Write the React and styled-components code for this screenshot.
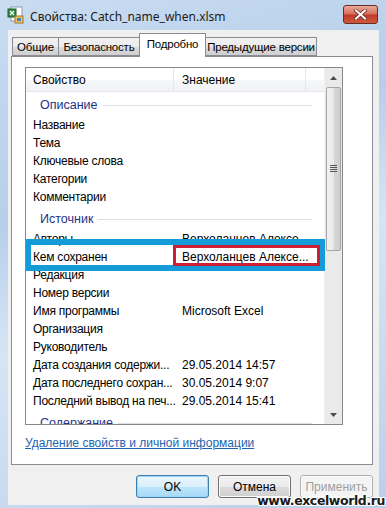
import React from "react";
import styled, { createGlobalStyle } from "styled-components";

const GlobalStyle = createGlobalStyle`
  html, body {
    margin: 0;
    padding: 0;
  }
  body {
    font-family: "Liberation Sans", Arial, sans-serif;
    font-size: 12px;
    color: #000;
  }
`;

const Window = styled.div`
  position: relative;
  width: 386px;
  height: 508px;
  display: flex;
  flex-direction: column;
  overflow: hidden;
  background: linear-gradient(160deg, #c9dcf1 0%, #b7cfea 35%, #d6e5f5 55%, #b9d0ea 100%);
`;

const TitleBar = styled.div`
  height: 30px;
  display: flex;
  align-items: center;
  padding: 0 8px 0 7px;
  gap: 5px;
  flex-shrink: 0;
`;

const Title = styled.div`
  flex: 1;
  font-family: "Noto Sans", sans-serif;
  font-size: 12px;
  color: #1b1b1b;
  padding-top: 2px;
`;

const CloseButton = styled.div`
  width: 33px;
  height: 17px;
  margin-top: -2px;
  border: 1px solid #6b2a22;
  border-radius: 3px;
  background: linear-gradient(180deg, #e9a99a 0%, #d7705c 45%, #c0392b 55%, #cf5a3c 100%);
  display: flex;
  align-items: center;
  justify-content: center;
`;

const Frame = styled.div`
  flex: 1;
  padding: 0 7px 3px 8px;
  display: flex;
`;

const Content = styled.div`
  flex: 1;
  background: #f0f0f0;
  display: flex;
  flex-direction: column;
  padding: 3px 6px 0 3px;
`;

const TabStrip = styled.div`
  display: flex;
  align-items: flex-end;
  height: 23px;
  padding-left: 1px;
  position: relative;
  z-index: 1;
`;

const Tab = styled.div`
  width: ${({ $w }) => $w}px;
  height: ${({ $active }) => ($active ? "24px" : "19px")};
  margin-bottom: ${({ $active }) => ($active ? "-1px" : "0")};
  border: 1px solid #898c95;
  border-bottom: ${({ $active }) => ($active ? "none" : "1px solid #898c95")};
  margin-left: ${({ $first }) => ($first ? "0" : "-1px")};
  background: ${({ $active }) =>
    $active ? "#fff" : "linear-gradient(180deg, #f2f2f2 0%, #ebebeb 50%, #dddddd 51%, #cfcfcf 100%)"};
  display: flex;
  align-items: center;
  justify-content: center;
  padding-bottom: ${({ $active }) => ($active ? "4px" : "0")};
  box-sizing: border-box;
  font-size: 11.5px;
  letter-spacing: -0.2px;
  white-space: nowrap;
`;

const Panel = styled.div`
  background: #fff;
  border: 1px solid #898c95;
  height: 409px;
  box-sizing: border-box;
  padding: 10px 29px 0 13px;
  display: flex;
  flex-direction: column;
`;

const ListBox = styled.div`
  height: 356px;
  border: 1px solid #828790;
  display: flex;
  position: relative;
  overflow: hidden;
`;

const ListMain = styled.div`
  flex: 1;
  display: flex;
  flex-direction: column;
  overflow: hidden;
`;

const HeaderRow = styled.div`
  height: 23px;
  flex-shrink: 0;
  display: flex;
  background: linear-gradient(180deg, #ffffff 0%, #ffffff 50%, #f5f7f9 51%, #f1f3f6 100%);
  border-bottom: 1px solid #e3e6ea;
`;

const HeaderCell = styled.div`
  width: ${({ $w }) => $w}px;
  flex: ${({ $w }) => ($w ? "none" : "1")};
  border-right: ${({ $last }) => ($last ? "none" : "1px solid #e3e8ee")};
  padding-left: ${({ $pad }) => $pad}px;
  display: flex;
  align-items: center;
  box-sizing: border-box;
`;

const GroupRow = styled.div`
  height: 24px;
  flex-shrink: 0;
  display: flex;
  align-items: center;
  padding: 2px 12px 0 14px;
  box-sizing: border-box;
  gap: 5px;
  color: #1e3287;
  font-size: 12.5px;
`;

const GroupLine = styled.div`
  flex: 1;
  height: 1px;
  background: #d8dee4;
  margin-top: 1px;
`;

const Row = styled.div`
  height: 18px;
  flex-shrink: 0;
  display: flex;
  align-items: center;
`;

const NameCell = styled.div`
  width: 148px;
  padding-left: 7px;
  box-sizing: border-box;
  white-space: nowrap;
  letter-spacing: -0.25px;
`;

const ValueCell = styled.div`
  flex: 1;
  padding-left: 8px;
  white-space: nowrap;
`;

const ScrollBar = styled.div`
  width: 17px;
  flex-shrink: 0;
  background: #eaeaea;
  border-left: 1px solid #f3f3f3;
  display: flex;
  flex-direction: column;
`;

const ArrowBox = styled.div`
  height: 19px;
  display: flex;
  align-items: center;
  justify-content: center;
  flex-shrink: 0;
`;

const Track = styled.div`
  flex: 1;
  display: flex;
  flex-direction: column;
`;

const Thumb = styled.div`
  height: 162px;
  margin: 0 1px;
  border: 1px solid #a4a4a4;
  border-radius: 2px;
  background: linear-gradient(90deg, #f2f2f2 0%, #e8e8e8 50%, #d6d6d6 51%, #cfcfcf 100%);
  display: flex;
  align-items: center;
  justify-content: center;
`;

const Highlight = styled.div`
  position: absolute;
  left: -1px;
  top: 171px;
  width: 300px;
  height: 32px;
  border: 6px solid #149bd8;
  box-sizing: border-box;
  pointer-events: none;
`;

const RedBox = styled.div`
  position: absolute;
  left: 147px;
  top: 177px;
  width: 147px;
  height: 21px;
  border: 3px solid #cc1f35;
  box-sizing: border-box;
  pointer-events: none;
`;

const LinkRow = styled.div`
  padding-top: 11px;
`;

const Link = styled.a`
  color: #1c64b0;
  text-decoration: underline;
  font-size: 12px;
  cursor: pointer;
`;

const ButtonRow = styled.div`
  display: flex;
  justify-content: flex-end;
  gap: 9px;
  padding-top: 10px;
`;

const Button = styled.div`
  width: 73px;
  height: 23px;
  box-sizing: border-box;
  border: 1px solid ${({ $focus, $disabled }) => ($focus ? "#3c7fb1" : $disabled ? "#adb2b5" : "#707070")};
  border-radius: 3px;
  background: ${({ $focus, $disabled }) =>
    $disabled
      ? "#f4f4f4"
      : $focus
      ? "linear-gradient(180deg, #eaf6fd 0%, #d9f0fc 50%, #bee6fd 51%, #a7d9f5 100%)"
      : "linear-gradient(180deg, #f2f2f2 0%, #ebebeb 50%, #dddddd 51%, #cfcfcf 100%)"};
  box-shadow: ${({ $focus }) => ($focus ? "inset 0 0 0 1px #9fd5f1" : "inset 0 0 0 1px #fcfcfc")};
  color: ${({ $disabled }) => ($disabled ? "#a0a0a0" : "#000")};
  display: flex;
  align-items: center;
  justify-content: center;
  font-size: 12px;
`;

const Watermark = styled.div`
  position: absolute;
  right: 0;
  bottom: 0;
  font-family: "DejaVu Sans", sans-serif;
  font-weight: bold;
  font-size: 12.5px;
  letter-spacing: -0.4px;
  color: #1a1a1a;
  text-shadow: -1px -1px 0 #fff, 1px -1px 0 #fff, -1px 1px 0 #fff, 1px 1px 0 #fff, 0 1px 0 #fff, 0 -1px 0 #fff;
  line-height: 15px;
  padding-right: 1px;
`;

const FileIcon = () => (
  <svg width="18" height="18" viewBox="0 0 18 18">
    <rect x="4" y="1" width="11" height="14" fill="#fff" stroke="#8a9bb0" />
    <rect x="1" y="3" width="8" height="8" fill="#2d8a3e" stroke="#1c5e28" />
    <path d="M3 5 L7 9 M7 5 L3 9" stroke="#fff" strokeWidth="1.4" />
    <rect x="8" y="10" width="8" height="7" fill="#e9c46a" stroke="#a07a1e" />
    <rect x="10" y="12" width="4" height="3" fill="#4a7fc1" />
  </svg>
);

const CloseIcon = () => (
  <svg width="13" height="11" viewBox="0 0 13 11">
    <path d="M2 1.5 L11 9.5 M11 1.5 L2 9.5" stroke="#6b2a22" strokeWidth="3.6" strokeLinecap="square" />
    <path d="M2 1.5 L11 9.5 M11 1.5 L2 9.5" stroke="#fff" strokeWidth="2" strokeLinecap="square" />
  </svg>
);

const Arrow = ({ down }) => (
  <svg width="7" height="4" viewBox="0 0 7 4">
    <path d={down ? "M0 0 L7 0 L3.5 4 Z" : "M0 4 L7 4 L3.5 0 Z"} fill="#4d4d4d" />
  </svg>
);

const Grip = () => (
  <svg width="7" height="8" viewBox="0 0 7 8">
    {[0, 2, 4, 6].map((y) => (
      <rect key={y} x="0" y={y} width="7" height="1" fill="#555" />
    ))}
  </svg>
);

const groups = [
  {
    title: "Описание",
    rows: [["Название"], ["Тема"], ["Ключевые слова"], ["Категории"], ["Комментарии"]],
  },
  {
    title: "Источник",
    rows: [
      ["Авторы", "Верхоланцев Алексе..."],
      ["Кем сохранен", "Верхоланцев Алексе..."],
      ["Редакция"],
      ["Номер версии"],
      ["Имя программы", "Microsoft Excel"],
      ["Организация"],
      ["Руководитель"],
      ["Дата создания содержи...", "29.05.2014 14:57"],
      ["Дата последнего сохран...", "30.05.2014 9:07"],
      ["Последний вывод на печ...", "29.05.2014 15:41"],
    ],
  },
  { title: "Содержание", rows: [] },
];

const tabs = [
  ["Общие", 47],
  ["Безопасность", 82],
  ["Подробно", 67],
  ["Предыдущие версии", 112],
];

export default function App() {
  return (
    <>
      <GlobalStyle />
      <Window>
        <TitleBar>
          <FileIcon />
          <Title>Свойства: Catch_name_when.xlsm</Title>
          <CloseButton>
            <CloseIcon />
          </CloseButton>
        </TitleBar>
        <Frame>
          <Content>
            <TabStrip>
              {tabs.map(([t, w], i) => (
                <Tab key={t} $w={w} $first={i === 0} $active={t === "Подробно"}>
                  {t}
                </Tab>
              ))}
            </TabStrip>
            <Panel>
              <ListBox>
                <ListMain>
                  <HeaderRow>
                    <HeaderCell $w={148} $pad={7}>Свойство</HeaderCell>
                    <HeaderCell $w={132} $pad={8}>Значение</HeaderCell>
                    <HeaderCell $last />
                  </HeaderRow>
                  {groups.map((g) => (
                    <React.Fragment key={g.title}>
                      <GroupRow>
                        {g.title}
                        <GroupLine />
                      </GroupRow>
                      {g.rows.map(([name, value]) => (
                        <Row key={name}>
                          <NameCell>{name}</NameCell>
                          <ValueCell>{value}</ValueCell>
                        </Row>
                      ))}
                    </React.Fragment>
                  ))}
                </ListMain>
                <ScrollBar>
                  <ArrowBox>
                    <Arrow />
                  </ArrowBox>
                  <Track>
                    <Thumb>
                      <Grip />
                    </Thumb>
                  </Track>
                  <ArrowBox>
                    <Arrow down />
                  </ArrowBox>
                </ScrollBar>
                <Highlight />
                <RedBox />
              </ListBox>
              <LinkRow>
                <Link>Удаление свойств и личной информации</Link>
              </LinkRow>
            </Panel>
            <ButtonRow>
              <Button $focus>OK</Button>
              <Button>Отмена</Button>
              <Button $disabled>Применить</Button>
            </ButtonRow>
          </Content>
        </Frame>
        <Watermark>www.excelworld.ru</Watermark>
      </Window>
    </>
  );
}
